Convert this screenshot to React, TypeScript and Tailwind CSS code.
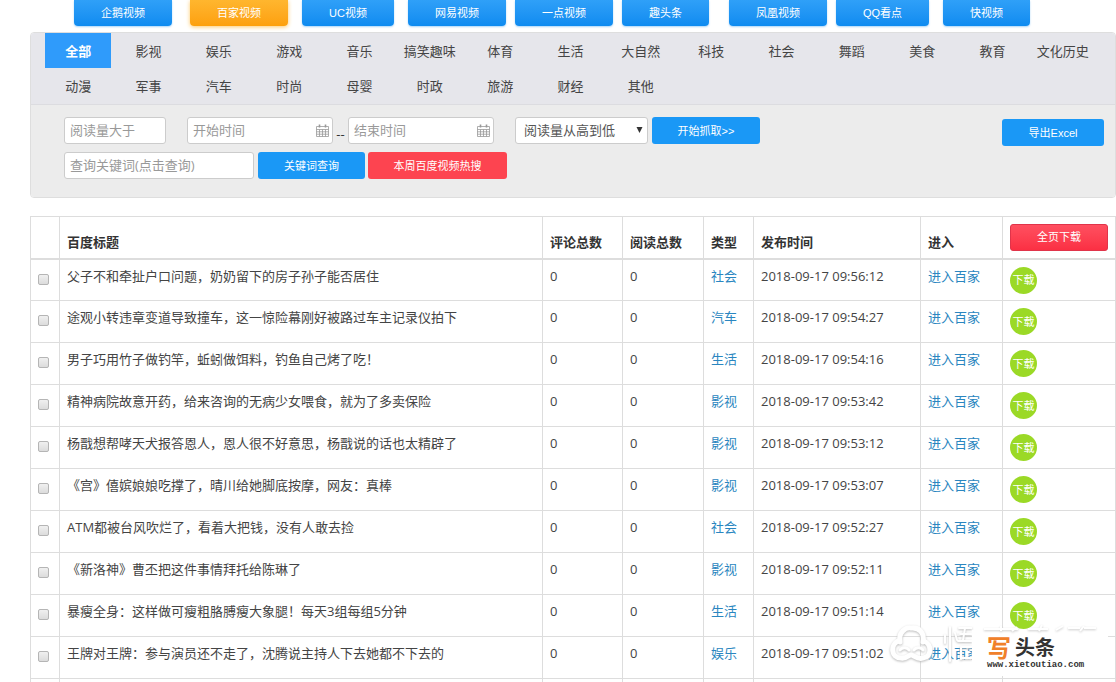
import clsx from 'clsx';

type Video = {
  title: string;
  type: string;
  time: string;
  noDownload?: boolean;
};

const sources = [
  { name: '企鹅视频', gap: 'ml-0' },
  { name: '百家视频', gap: 'ml-[18px]', active: true },
  { name: 'UC视频', gap: 'ml-3.5' },
  { name: '网易视频', gap: 'ml-3.5' },
  { name: '一点视频', gap: 'ml-[9px]' },
  { name: '趣头条', gap: 'ml-[9px]' },
  { name: '凤凰视频', gap: 'ml-5' },
  { name: 'QQ看点', gap: 'ml-[9px]' },
  { name: '快视频', gap: 'ml-3.5' },
];

const categories = [
  '全部', '影视', '娱乐', '游戏', '音乐', '搞笑趣味', '体育', '生活',
  '大自然', '科技', '社会', '舞蹈', '美食', '教育', '文化历史',
  '动漫', '军事', '汽车', '时尚', '母婴', '时政', '旅游', '财经', '其他',
];

const videos: Video[] = [
  { title: '父子不和牵扯户口问题，奶奶留下的房子孙子能否居住', type: '社会', time: '2018-09-17 09:56:12' },
  { title: '途观小转违章变道导致撞车，这一惊险幕刚好被路过车主记录仪拍下', type: '汽车', time: '2018-09-17 09:54:27' },
  { title: '男子巧用竹子做钓竿，蚯蚓做饵料，钓鱼自己烤了吃！', type: '生活', time: '2018-09-17 09:54:16' },
  { title: '精神病院故意开药，给来咨询的无病少女喂食，就为了多卖保险', type: '影视', time: '2018-09-17 09:53:42' },
  { title: '杨戬想帮哮天犬报答恩人，恩人很不好意思，杨戬说的话也太精辟了', type: '影视', time: '2018-09-17 09:53:12' },
  { title: '《宫》僖嫔娘娘吃撑了，晴川给她脚底按摩，网友：真棒', type: '影视', time: '2018-09-17 09:53:07' },
  { title: 'ATM都被台风吹烂了，看着大把钱，没有人敢去捡', type: '社会', time: '2018-09-17 09:52:27' },
  { title: '《新洛神》曹丕把这件事情拜托给陈琳了', type: '影视', time: '2018-09-17 09:52:11' },
  { title: '暴瘦全身：这样做可瘦粗胳膊瘦大象腿！每天3组每组5分钟', type: '生活', time: '2018-09-17 09:51:14' },
  { title: '王牌对王牌：参与演员还不走了，沈腾说主持人下去她都不下去的', type: '娱乐', time: '2018-09-17 09:51:02', noDownload: true },
];

const buttonFont = "font-['Liberation_Sans','Noto_Sans_CJK_SC',sans-serif] text-[11px] leading-4 text-white";
const field = 'h-[27px] rounded-[3px] border border-[#ccc] bg-white pb-[2px] pl-[5px] text-[13px] leading-5 text-[#555] placeholder:text-[#999]';
const cell = 'border border-[#ddd] px-[7px]';

function SourceNav() {
  return (
    <nav className="flex pl-[74px]">
      {sources.map((s) => (
        <button
          key={s.name}
          type="button"
          className={clsx(
            buttonFont,
            s.gap,
            'h-[26px] shrink-0 rounded-b-[4px] px-[27px] whitespace-nowrap',
            s.active
              ? 'bg-linear-to-b from-[#ffb62e] to-[#fda00a] shadow-[0_1px_4px_#fdc96a]'
              : 'bg-linear-to-b from-[#2fa0f8] to-[#0d8bf0] shadow-[0_1px_2px_#a9d4f8]',
          )}
        >
          {s.name}
        </button>
      ))}
    </nav>
  );
}

function CategoryGrid() {
  return (
    <div className="grid grid-cols-15 border-b border-[#dcdce0] bg-[#e6e6eb] pr-[17px] pb-px pl-3">
      {categories.map((name, i) => (
        <button
          key={name}
          type="button"
          className={clsx(
            'mx-[2px] h-[35px] text-center text-[13px] leading-5 whitespace-nowrap',
            i === 0 ? 'bg-[#2f9bfb] font-bold text-white' : 'text-[#444]',
          )}
        >
          {name}
        </button>
      ))}
    </div>
  );
}

function CalendarIcon() {
  return (
    <svg className="pointer-events-none absolute top-[7px] right-[4px] h-[13px] w-[13px]" viewBox="0 0 13 13" fill="none" stroke="#999">
      <path d="M.5 2.5h12v10H.5zM.5 5.5h12M.5 7.8h12M.5 10.2h12M3.5 5.5v7M6.5 5.5v7M9.5 5.5v7" strokeWidth=".8" />
      <path d="M3.5.5v3M9.5.5v3" strokeWidth="1.6" />
    </svg>
  );
}

function DateField({ label }: { label: string }) {
  return (
    <div className="relative w-[146px]">
      <input type="text" aria-label={label} placeholder={label} className={clsx(field, 'block w-full')} />
      <CalendarIcon />
    </div>
  );
}

function Filters() {
  return (
    <div className="flex items-start justify-between bg-[#ececec] pt-3 pr-[11px] pb-[18px] pl-[33px]">
      <form className="flex flex-col gap-2">
        <div className="flex items-center">
          <input type="text" aria-label="阅读量大于" placeholder="阅读量大于" className={clsx(field, 'w-[102px]')} />
          <div className="ml-[21px] flex items-end">
            <DateField label="开始时间" />
            <span className="w-[15px] text-center text-[13px] leading-5 text-[#333]">--</span>
            <DateField label="结束时间" />
          </div>
          <div className="relative ml-[21px] w-[133px]">
            <select aria-label="排序" className={clsx(field, 'block w-full appearance-none pl-[8px]')}>
              <option>阅读量从高到低</option>
            </select>
            <svg className="pointer-events-none absolute top-[10px] right-[5px] h-[6px] w-[7px]" viewBox="0 0 7 6">
              <path d="M0.5 0h6L3.5 6z" fill="#333" />
            </svg>
          </div>
          <button type="button" className={clsx(buttonFont, 'ml-1 h-[27px] w-[108px] rounded-[3px] bg-[#1a98f6]')}>
            开始抓取&gt;&gt;
          </button>
        </div>
        <div className="flex items-center">
          <input type="text" aria-label="查询关键词" placeholder="查询关键词(点击查询)" className={clsx(field, 'w-[190px]')} />
          <button type="button" className={clsx(buttonFont, 'ml-1 h-[27px] w-[107px] rounded-[3px] bg-[#1a98f6]')}>
            关键词查询
          </button>
          <button type="button" className={clsx(buttonFont, 'ml-[3px] h-[27px] w-[139px] rounded-[3px] bg-[#fd4450]')}>
            本周百度视频热搜
          </button>
        </div>
      </form>
      <button type="button" className={clsx(buttonFont, 'mt-[2px] h-[27px] w-[102px] rounded-[3px] bg-[#1a98f6]')}>
        导出Excel
      </button>
    </div>
  );
}

function VideoTable() {
  return (
    <table className="w-full table-fixed border-collapse text-[13px] leading-5 text-[#444]">
      <colgroup>
        <col className="w-[29px]" />
        <col />
        <col className="w-[80px]" />
        <col className="w-[81px]" />
        <col className="w-[50px]" />
        <col className="w-[167px]" />
        <col className="w-[82px]" />
        <col className="w-[113px]" />
      </colgroup>
      <thead>
        <tr className="h-[42px] border-b-2 border-[#ddd] text-left align-bottom text-[#333]">
          <th className={cell} aria-label="选择" />
          <th className={clsx(cell, 'pb-[6px]')}>百度标题</th>
          <th className={clsx(cell, 'pb-[6px]')}>评论总数</th>
          <th className={clsx(cell, 'pb-[6px]')}>阅读总数</th>
          <th className={clsx(cell, 'pb-[6px]')}>类型</th>
          <th className={clsx(cell, 'pb-[6px]')}>发布时间</th>
          <th className={clsx(cell, 'pb-[6px]')}>进入</th>
          <th className={clsx(cell, 'pb-[7px]')}>
            <button
              type="button"
              className={clsx(buttonFont, 'block h-[27px] w-full rounded-[3px] border border-[#e0344a] bg-linear-to-b from-[#ff4f60] to-[#fb2f43] font-normal')}
            >
              全页下载
            </button>
          </th>
        </tr>
      </thead>
      <tbody>
        {videos.map((v) => (
          <tr key={v.time} className="h-[42px] align-top">
            <td className={clsx(cell, 'pt-[14px]')}>
              <input
                type="checkbox"
                aria-label={v.title}
                className="block h-[11px] w-[11px] appearance-none rounded-[2px] border border-[#b5b5b5] bg-linear-to-b from-[#f0f0f0] to-[#dcdcdc] checked:bg-[#1a98f6]"
              />
            </td>
            <td className={clsx(cell, 'pt-[6px] whitespace-nowrap')}>{v.title}</td>
            <td className={clsx(cell, 'pt-[6px]')}>0</td>
            <td className={clsx(cell, 'pt-[6px]')}>0</td>
            <td className={clsx(cell, 'pt-[6px] whitespace-nowrap')}>
              <a href="#" className="text-[#2a86c0]">{v.type}</a>
            </td>
            <td className={clsx(cell, 'pt-[6px] whitespace-nowrap')}>{v.time}</td>
            <td className={clsx(cell, 'pt-[6px] whitespace-nowrap')}>
              <a href="#" className="text-[#2a86c0]">进入百家</a>
            </td>
            <td className={clsx(cell, 'pt-[7px]')}>
              {!v.noDownload && (
                <button type="button" className={clsx(buttonFont, 'block h-[27px] w-[27px] rounded-full bg-[#9bd926] whitespace-nowrap')}>
                  下载
                </button>
              )}
            </td>
          </tr>
        ))}
        <tr className="h-[3px]">
          {Array.from({ length: 8 }, (_, i) => (
            <td key={i} className="border-x border-[#ddd]" />
          ))}
        </tr>
      </tbody>
    </table>
  );
}

function Watermark() {
  return (
    <div className="pointer-events-none fixed right-2 bottom-1.5 flex items-end">
      <svg className="mb-3 h-[40px] w-[82px] drop-shadow-[0_1px_1px_#bbb]" viewBox="0 0 82 40" fill="none" stroke="#fff" strokeWidth="5" strokeLinecap="round">
        <path d="M10 18C8 8 16 3 21 4C29 3 35 9 33 18" />
        <path d="M8 17C0 21 1 34 11 34C17 35 18 31 21 31C24 31 27 36 33 34C42 33 42 20 34 17" />
        <path d="M10 26a5 4 0 0 1 9 0M24 26a5 4 0 0 1 9 0" strokeWidth="3" />
        {/* faded brush strokes that run under the white plate */}
        <path d="M60 3v34M55 11v8M65 9l2 7M69 4h13M75 4l-2 12M70 10h12M68 17h14M71 23h11M71 23v12M71 34h11" strokeWidth="2" />
      </svg>
      <div className="relative flex h-[46px] w-[136px] flex-col bg-white pt-1.5 pl-[15px]">
        <svg className="absolute -top-[6px] left-0 h-[8px] w-[126px] drop-shadow-[0_1px_1px_#ccc]" viewBox="0 0 126 8" fill="none" stroke="#fff" strokeWidth="2">
          <path d="M12 5h34M29 2v5M40 7l5-4M56 5h20M70 1l-3 6M84 6l7-4M96 4h12M112 2l-4 5M112 4h12" />
        </svg>
        <div className="flex items-center gap-1 font-bold whitespace-nowrap">
          <span className="text-[24px] leading-6 text-[#f0802a]">写</span>
          <span className="text-[20px] leading-6 text-[#333]">头条</span>
        </div>
        <span className="font-['Liberation_Mono',monospace] text-[9px] leading-[10px] font-bold text-[#333]">www.xietoutiao.com</span>
      </div>
    </div>
  );
}

export default function App() {
  return (
    <div className="min-h-screen overflow-hidden bg-white font-['Open_Sans','Noto_Sans_CJK_SC',sans-serif]">
      <SourceNav />
      <main className="pl-[30px]">
        <section className="mt-1.5 overflow-hidden rounded-[4px] border border-[#dedede]">
          <CategoryGrid />
          <Filters />
        </section>
        <section className="mt-[18px]">
          <VideoTable />
        </section>
      </main>
      <Watermark />
    </div>
  );
}
